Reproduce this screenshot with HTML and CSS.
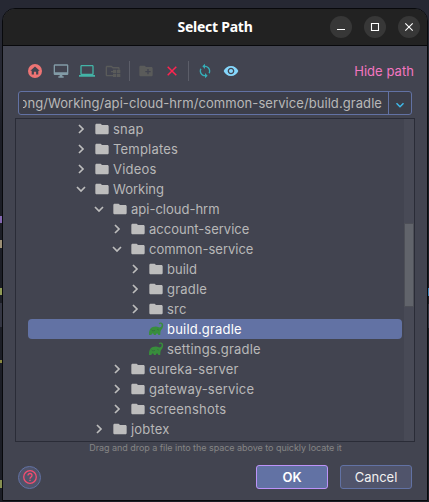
FILE: index.html
```html
<!DOCTYPE html>
<html lang="en">
<head>
<meta charset="utf-8">
<title>Select Path</title>
<link rel="stylesheet" href="styles.css">
</head>
<body>
<svg class="defs" width="0" height="0" aria-hidden="true">
  <symbol id="folder" viewBox="0 0 24 24"><path d="M10 4H4c-1.100 0-2 .9-2 2v12c0 1.100.9 2 2 2h16c1.100 0 2-.9 2-2V8c0-1.100-.9-2-2-2h-8z"/></symbol>
  <symbol id="right" viewBox="0 0 16 16"><path d="M6 4l4 4-4 4" fill="none" stroke="currentColor" stroke-width="1.700"/></symbol>
  <symbol id="down" viewBox="0 0 16 16"><path d="M4 6l4 4 4-4" fill="none" stroke="currentColor" stroke-width="1.700"/></symbol>
  <symbol id="gradle" viewBox="0 0 16 16"><path d="M1 14C.8 10 2 7 4.700 6.100c2-.9 4.500-.8 6 .2 1.400.5 2.500-.3 2.900-1.500.3-1.200-.3-2.100-1.200-2-.6 0-.8.6-1.300.4-.5-.3-.1-1.500 1.300-1.700 1.500-.3 2.800.9 2.800 2.700 0 2.400-1.300 3.800-2.200 5-.7 1-.6 2.900-.8 4.800h-1.900c-.1-1-.5-1.600-1.200-1.600s-1.200.6-1.300 1.600H5.900c-.1-1-.5-1.600-1.200-1.600s-1.200.6-1.300 1.600z"/><path d="M9.300 8.300l1.500.8M3.300 8.500c.8 1.500 2.200 1.800 3.700.8" fill="none" stroke="#34583f" stroke-width=".5"/></symbol>
</svg>
<div class="edge">
  <i class="frag violet"></i><i class="frag sand"></i><i class="frag lime"></i><i class="band"></i><i class="frag olive"></i><i class="frag leaf"></i>
</div>
<main class="window">
  <header class="titlebar">
    <h1>Select Path</h1>
    <div class="controls">
      <span><svg viewBox="0 0 22 22"><path d="M7 13.500h8"/></svg></span>
      <span><svg viewBox="0 0 22 22"><path d="M7.500 7.500h7v7h-7z"/></svg></span>
      <span><svg viewBox="0 0 22 22"><path d="M7.300 7.300l7.400 7.400M14.700 7.300l-7.400 7.400"/></svg></span>
    </div>
  </header>
  <section class="content">
    <div class="toolbar">
      <svg class="home" viewBox="0 0 16 16"><circle cx="8" cy="8" r="7"/><path class="cut" d="M8 3.400L3.300 7.700h1.400V11.500h2.200V8.700h2.200v2.800h2.200V7.700h1.400z"/></svg>
      <svg class="desktop" viewBox="0 0 24 24"><path d="M21 2H3c-1.100 0-2 .9-2 2v12c0 1.100.9 2 2 2h7v2H8v2h8v-2h-2v-2h7c1.100 0 2-.9 2-2V4c0-1.100-.9-2-2-2zm0 12H3V4h18z"/></svg>
      <svg class="laptop" viewBox="0 0 24 24"><path d="M20 18c1.100 0 2-.9 2-2V5c0-1.100-.9-2-2-2H4c-1.100 0-2 .9-2 2v11c0 1.100.9 2 2 2H0v2.500h24V18zM4 5h16v11H4z"/></svg>
      <svg class="module" viewBox="0 0 24 24"><path d="M20 6h-8l-2-2H3C1.900 4 1 4.900 1 6v12c0 1.100.9 2 2 2h9v-2H3V6.200h6.500l2 2H20v2h2V8c0-1.100-.9-2-2-2z"/><path d="M12 10h5v5h-5zm6 0h5v5h-5zm-6 6h5v5h-5zm6 0h5v5h-5zM9 12h4v2H9z"/></svg>
      <i class="sep"></i>
      <svg class="newfolder" viewBox="0 0 24 24"><path d="M20 6h-8l-2-2H4c-1.100 0-2 .9-2 2v12c0 1.100.9 2 2 2h16c1.100 0 2-.9 2-2V8c0-1.100-.9-2-2-2zm-1 8h-3v3h-2v-3h-3v-2h3V9h2v3h3z"/></svg>
      <svg class="delete" viewBox="0 0 16 16"><path d="M3.700 3.700l8.600 8.600M12.300 3.700l-8.600 8.600"/></svg>
      <i class="sep"></i>
      <svg class="refresh" viewBox="0 0 24 24"><path d="M12 4V1L8 5l4 4V6c3.310 0 6 2.690 6 6 0 1.010-.25 1.970-.7 2.800l1.460 1.460A7.930 7.930 0 0 0 20 12c0-4.420-3.580-8-8-8zm0 14c-3.310 0-6-2.690-6-6 0-1.010.25-1.970.7-2.800L5.240 7.740A7.930 7.930 0 0 0 4 12c0 4.420 3.580 8 8 8v3l4-4-4-4z"/></svg>
      <svg class="eye" viewBox="0 0 24 24"><path d="M12 4.500C7 4.500 2.730 7.610 1 12c1.730 4.390 6 7.500 11 7.500s9.270-3.110 11-7.500c-1.730-4.390-6-7.500-11-7.500zM12 17c-2.760 0-5-2.240-5-5s2.240-5 5-5 5 2.240 5 5-2.240 5-5 5zm0-8c-1.660 0-3 1.340-3 3s1.340 3 3 3 3-1.340 3-3-1.340-3-3-3z"/></svg>
      <a class="hide">Hide path</a>
    </div>
    <div class="path">
      <div class="value"><span>ong/Working/api-cloud-hrm/common-service/build.gradle</span></div>
      <div class="drop"><svg viewBox="0 0 16 16"><use href="#down"/></svg></div>
    </div>
    <div class="tree">
      <ul>
        <li class="l1"><svg class="arrow"><use href="#right"/></svg><svg><use href="#folder"/></svg><span>snap</span></li>
        <li class="l1"><svg class="arrow"><use href="#right"/></svg><svg><use href="#folder"/></svg><span>Templates</span></li>
        <li class="l1"><svg class="arrow"><use href="#right"/></svg><svg><use href="#folder"/></svg><span>Videos</span></li>
        <li class="l1 tight"><svg class="arrow"><use href="#down"/></svg><svg><use href="#folder"/></svg><span>Working</span></li>
        <li class="l2 tight"><svg class="arrow"><use href="#down"/></svg><svg><use href="#folder"/></svg><span>api-cloud-hrm</span></li>
        <li class="l3 tight"><svg class="arrow"><use href="#right"/></svg><svg><use href="#folder"/></svg><span>account-service</span></li>
        <li class="l3 tight"><svg class="arrow"><use href="#down"/></svg><svg><use href="#folder"/></svg><span>common-service</span></li>
        <li class="l4 tight"><svg class="arrow"><use href="#right"/></svg><svg><use href="#folder"/></svg><span>build</span></li>
        <li class="l4"><svg class="arrow"><use href="#right"/></svg><svg><use href="#folder"/></svg><span>gradle</span></li>
        <li class="l4"><svg class="arrow"><use href="#right"/></svg><svg><use href="#folder"/></svg><span>src</span></li>
        <li class="l4 selected"><svg class="arrow"></svg><svg class="gradle"><use href="#gradle"/></svg><span>build.gradle</span></li>
        <li class="l4"><svg class="arrow"></svg><svg class="gradle"><use href="#gradle"/></svg><span>settings.gradle</span></li>
        <li class="l3"><svg class="arrow"><use href="#right"/></svg><svg><use href="#folder"/></svg><span>eureka-server</span></li>
        <li class="l3"><svg class="arrow"><use href="#right"/></svg><svg><use href="#folder"/></svg><span>gateway-service</span></li>
        <li class="l3"><svg class="arrow"><use href="#right"/></svg><svg><use href="#folder"/></svg><span>screenshots</span></li>
        <li class="l2"><svg class="arrow"><use href="#right"/></svg><svg><use href="#folder"/></svg><span>jobtex</span></li>
      </ul>
      <div class="scroll"><div class="thumb"></div></div>
    </div>
    <p class="hint">Drag and drop a file into the space above to quickly locate it</p>
    <footer>
      <div class="help"><svg viewBox="0 0 16 16"><circle cx="8" cy="8" r="6.300"/><path d="M6 6.500c0-2.700 4-2.600 4 0C10 7.900 8 8 8 9.700M8 10.800v1.300"/></svg></div>
      <button class="ok">OK</button>
      <button>Cancel</button>
    </footer>
  </section>
</main>
<div class="edge right"><i class="frag blue"></i><i class="band"></i></div>
</body>
</html>
```
FILE: styles.css
```css
* { box-sizing: border-box; }
body {
  margin: 0;
  width: 429px;
  height: 502px;
  display: flex;
  overflow: hidden;
  background: linear-gradient(#262833 0 80px, #1c1e26 130px);
  font-family: Inter, "Liberation Sans", sans-serif;
  font-size: 13px;
  color: #b8b8b8;
}
.defs { position: absolute; }
.edge { width: 2px; display: flex; flex-direction: column; }
.edge i { width: 2px; flex: none; }
.violet { margin-top: 216px; height: 7px; background: #8467b1; }
.sand { margin-top: 17px; height: 8px; background: #9b8e74; }
.lime { margin-top: 40px; height: 7px; background: #909b55; }
.band { margin-top: 8px; height: 24px; background: #343643; }
.olive { margin-top: 33px; height: 3px; background: #88883f; }
.leaf { margin-top: 117px; height: 8px; background: #858e4f; }
.edge.right { width: 1px; }
.blue { margin-top: 288px; height: 8px; background: #3d83b8; }
.window {
  width: 426px;
  height: 493px;
  margin-top: 8px;
  border: 1px solid #08090c;
  border-radius: 13px 13px 0 0;
  overflow: hidden;
  background: #424450;
  flex: none;
}
.titlebar {
  height: 37px;
  background: #222;
  border-bottom: 1px solid #08090c;
  display: grid;
  grid-template-columns: 1fr auto 1fr;
  align-items: center;
}
h1 {
  grid-column: 2;
  margin: 0;
  font: 700 14px/20px "Noto Sans", sans-serif;
  letter-spacing: -.25px;
  color: #fff;
}
.controls { justify-self: end; display: flex; gap: 12px; padding-right: 7px; }
.controls span { width: 22px; height: 22px; border-radius: 50%; background: #373737; }
.controls svg { display: block; width: 22px; height: 22px; fill: none; stroke: #fff; }
.controls path { stroke-width: 1.1; }
.content { padding: 15px 12px 0; }
.toolbar { height: 20px; margin-left: 12px; margin-right: 1px; display: flex; align-items: center; }
.toolbar svg { width: 16px; height: 16px; margin-right: 10px; flex: none; }
.sep { width: 1px; height: 20px; margin-right: 8px; background: #5c5e69; }
.toolbar .module, .toolbar .delete { margin-right: 8px; }
.home { fill: #ed7474; }
.cut { fill: #424450; }
.desktop { fill: #829ba6; }
.laptop { fill: #43b3a6; }
.module, .newfolder { fill: #5a5b5a; }
.delete { fill: none; stroke: #ff2450; stroke-width: 1.5; }
.refresh { fill: #35aeb8; }
.eye { fill: #85d7fc; }
.hide { margin-left: auto; color: #f276c0; letter-spacing: .05px; }
.path {
  height: 24px;
  width: 394px;
  margin: 10px 0 0 3px;
  border: 1px solid #6272a4;
  border-radius: 3px;
  background: #3c3e49;
  display: flex;
}
.value { flex: 1; margin: 0 6px 0 4px; overflow: hidden; display: flex; justify-content: flex-end; line-height: 22px; white-space: nowrap; letter-spacing: .07px; }
.drop { width: 23px; border-left: 1px solid #6272a4; display: flex; align-items: center; justify-content: center; color: #3eb8e8; padding-top: 3px; }
.drop svg { width: 14px; height: 14px; }
.tree {
  width: 400px;
  height: 324px;
  margin-top: 3px;
  border: 1px solid #2a2c37;
  display: flex;
  justify-content: space-between;
}
ul { margin: 0; padding: 0 0 0 12px; width: 386px; list-style: none; }
li { height: 20px; display: flex; align-items: center; border-radius: 4px; line-height: 20px; white-space: nowrap; letter-spacing: .2px; }
.tight { letter-spacing: 0; }
li svg { width: 16px; height: 16px; fill: #bdbdbd; color: #bdbdbd; flex: none; }
li .arrow { margin-right: 5px; }
li span { margin-left: 3px; }
li .gradle { fill: #388e3c; }
.l1 { padding-left: 45px; }
.l2 { padding-left: 63px; }
.l3 { padding-left: 81px; }
.l4 { padding-left: 99px; }
.selected { background: #6272a4; color: #fff; }
.scroll { width: 10px; background: #484a56; padding-top: 104px; }
.thumb { width: 10px; height: 84px; background: #61646b; border: 1px solid #4d4f57; }
.hint { margin: 0; padding-left: 1px; height: 13px; text-align: center; font-size: 9px; letter-spacing: -.04px; line-height: 12px; color: #858585; white-space: nowrap; }
footer { display: flex; align-items: center; margin: 10px 3px 0; }
.help { width: 23px; height: 23px; border: 1px solid #6272a4; border-radius: 50%; background: #50546b; display: flex; align-items: center; justify-content: center; margin-right: auto; }
.help svg { width: 16px; height: 16px; fill: none; stroke: #f44d70; stroke-width: 1.3; }
button { width: 72px; height: 24px; margin: 0 0 0 12px; padding: 0; border: 1px solid #6272a4; border-radius: 3px; background: #50546b; color: #f0f0f0; font: 13px Inter, sans-serif; letter-spacing: 0; }
.ok { background: #6272a4; border-color: #bd93f9; font-weight: 600; color: #fff; }
```
